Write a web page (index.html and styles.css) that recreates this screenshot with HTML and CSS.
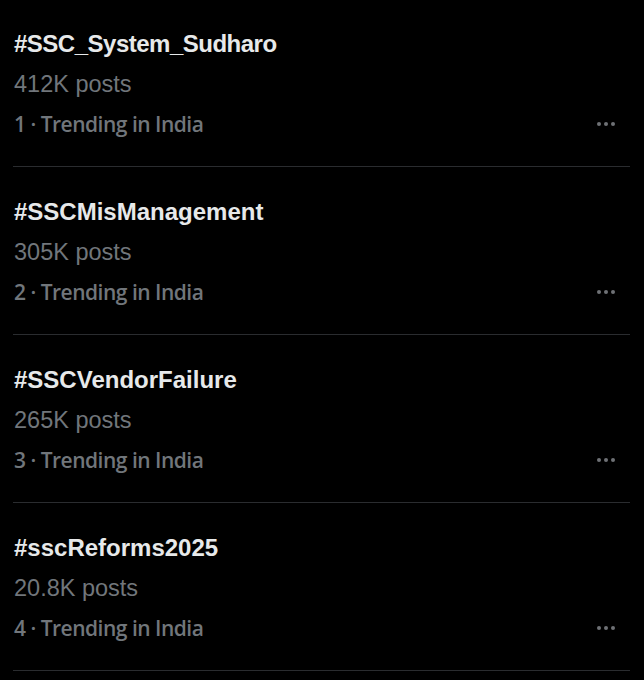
FILE: index.html
```html
<!DOCTYPE html>
<html>
<head>
<meta charset="utf-8">
<link rel="stylesheet" href="styles.css">
</head>
<body>
<div class="list">
  <div class="item">
    <div class="info">
      <div class="tag tag-tight">#SSC_System_Sudharo</div>
      <div class="count">412K posts</div>
      <div class="meta">1 · Trending in India</div>
    </div>
    <div class="more"><span></span><span></span><span></span></div>
  </div>
  <div class="item">
    <div class="info">
      <div class="tag">#SSCMisManagement</div>
      <div class="count">305K posts</div>
      <div class="meta">2 · Trending in India</div>
    </div>
    <div class="more"><span></span><span></span><span></span></div>
  </div>
  <div class="item">
    <div class="info">
      <div class="tag">#SSCVendorFailure</div>
      <div class="count">265K posts</div>
      <div class="meta">3 · Trending in India</div>
    </div>
    <div class="more"><span></span><span></span><span></span></div>
  </div>
  <div class="item">
    <div class="info">
      <div class="tag">#sscReforms2025</div>
      <div class="count">20.8K posts</div>
      <div class="meta">4 · Trending in India</div>
    </div>
    <div class="more"><span></span><span></span><span></span></div>
  </div>
</div>
</body>
</html>
```

FILE: styles.css
```css
html, body {
  margin: 0;
  padding: 0;
  background: #000;
}
body {
  width: 644px;
  height: 680px;
  overflow: hidden;
}
.list {
  display: flex;
  flex-direction: column;
  padding: 0 14px 0 13px;
  margin-top: -1px;
}
.item {
  display: flex;
  align-items: flex-end;
  justify-content: space-between;
  padding: 25px 0 22px 1px;
  border-bottom: 1px solid #2a2c2f;
}
.info {
  display: flex;
  flex-direction: column;
}
.tag, .count, .meta {
  height: 40px;
  line-height: 40px;
  white-space: nowrap;
}
.tag {
  font-family: "Liberation Sans", Arial, sans-serif;
  font-weight: bold;
  font-size: 24px;
  color: #e7e9ea;
}
.tag-tight {
  letter-spacing: -0.5px;
}
.count {
  font-family: "Liberation Sans", Arial, sans-serif;
  font-size: 23.5px;
  color: #71767b;
}
.meta {
  font-family: "Open Sans", sans-serif;
  font-weight: 600;
  font-size: 21px;
  letter-spacing: -0.5px;
  color: #71767b;
}
.more {
  display: flex;
  gap: 3px;
  height: 40px;
  align-items: center;
  margin-right: 15px;
}
.more span {
  width: 4px;
  height: 4px;
  border-radius: 50%;
  background: #6e7175;
}
```
